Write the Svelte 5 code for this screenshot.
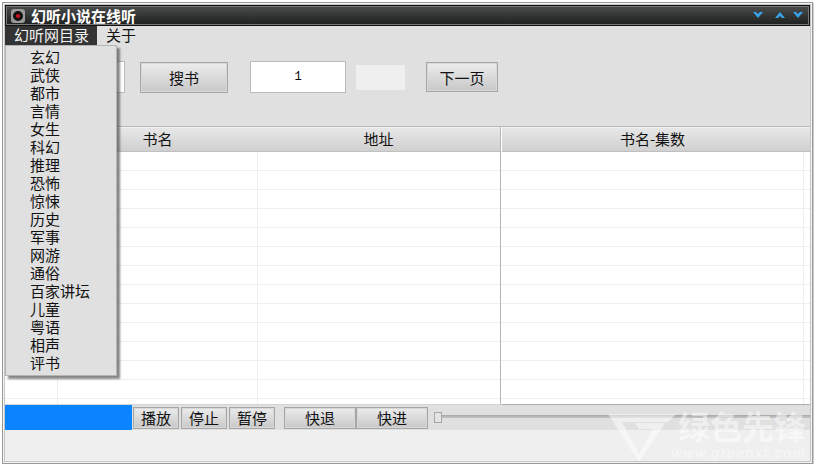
<script>
	const categories = ['玄幻', '武侠', '都市', '言情', '女生', '科幻', '推理', '恐怖', '惊悚', '历史', '军事', '网游', '通俗', '百家讲坛', '儿童', '粤语', '相声', '评书']
	const rows = Array(14).fill(0)
</script>

<div class="window">
	<div class="frame">
		<div class="titlebar">
			<span class="app-icon"><span class="lens"></span></span>
			<span class="title">幻听小说在线听</span>
			<span class="controls">
				<svg width="10" height="7" viewBox="0 0 10 7"><path d="M0 0H3L5 2 7 0H10L5 6Z" /></svg>
				<svg class="up" width="10" height="7" viewBox="0 0 10 7"><path d="M0 6H3L5 4 7 6H10L5 0Z" /></svg>
				<svg width="10" height="7" viewBox="0 0 10 7"><path d="M0 0H3L5 2 7 0H10L5 6Z" /></svg>
			</span>
		</div>

		<div class="menubar">
			<span class="menu-item active">幻听网目录</span>
			<span class="menu-item">关于</span>
			<ul class="popup">
				{#each categories as c}
					<li>{c}</li>
				{/each}
			</ul>
		</div>

		<div class="toolbar">
			<div class="field keyword"></div>
			<button class="btn search">搜书</button>
			<div class="field page">1</div>
			<div class="total"></div>
			<button class="btn next">下一页</button>
		</div>

		<div class="tables">
			<div class="table books">
				<div class="head">
					<span class="c0"></span>
					<span class="c1">书名</span>
					<span class="c2">地址</span>
				</div>
				{#each rows as _}
					<div class="row">
						<span class="c0"></span>
						<span class="c1"></span>
						<span class="c2"></span>
					</div>
				{/each}
			</div>
			<div class="table episodes">
				<div class="head">
					<span class="wide">书名-集数</span>
					<span class="end"></span>
				</div>
				{#each rows as _}
					<div class="row">
						<span class="wide"></span>
						<span class="end"></span>
					</div>
				{/each}
			</div>
		</div>

		<div class="player">
			<div class="progress"></div>
			<button class="btn small">播放</button>
			<button class="btn small">停止</button>
			<button class="btn small">暂停</button>
			<button class="btn seek back">快退</button>
			<button class="btn seek">快进</button>
			<div class="slider"><span class="thumb"></span></div>
		</div>

		<div class="footer"></div>

		<div class="watermark">
			<svg width="70" height="50" viewBox="0 0 70 50">
				<path d="M0 2H68L60 10H14L31 42 45 17H31L27 11H57L31 50Z" />
			</svg>
			<div class="mark-text">
				<span class="mark-cn">绿色先锋</span>
				<span class="mark-url">www.greenxf.com</span>
			</div>
		</div>
	</div>
</div>

<style>
	:global(body) {
		background: #fff;
		font-family: "Noto Sans CJK SC", "Liberation Sans", sans-serif;
	}

	.window {
		box-sizing: border-box;
		width: 811px;
		height: 462px;
		margin: 2px 0 0 2px;
		padding: 1px;
		border: 1px solid #999;
		background: #f4f4f4;
		box-shadow: 1px 1px 0 #ccc;
	}

	.frame {
		position: relative;
		box-sizing: border-box;
		height: 100%;
		border: 1px solid #c6c6c6;
		background: #e0e0e0;
		display: flex;
		flex-direction: column;
		overflow: hidden;
		color: #111;
		font-size: 15px;
	}

	.titlebar {
		box-sizing: border-box;
		height: 21px;
		flex: none;
		display: flex;
		align-items: center;
		padding: 0 6px 0 5px;
		border: 1px solid #111;
		box-shadow: inset 0 0 0 1px #777;
		background: linear-gradient(#4b4d4d, #1d1f1f);
	}

	.app-icon {
		box-sizing: border-box;
		width: 14px;
		height: 14px;
		border-radius: 3px;
		background: #999;
		display: flex;
		align-items: center;
		justify-content: center;
	}

	.lens {
		box-sizing: border-box;
		width: 10px;
		height: 10px;
		border-radius: 50%;
		background: #d01020;
		border: 3px solid #111;
	}

	.title {
		margin-left: 6px;
		color: #fff;
		font-weight: 700;
		font-size: 15px;
		line-height: 19px;
	}

	.controls {
		margin-left: auto;
		display: flex;
		gap: 12px;
	}

	.controls .up {
		margin-right: -4px;
	}

	.controls svg path {
		fill: #35a4ea;
	}

	.menubar {
		position: relative;
		z-index: 2;
		height: 20px;
		flex: none;
		display: flex;
		align-items: stretch;
		line-height: 18px;
	}

	.menu-item {
		padding: 0 9px;
		white-space: nowrap;
	}

	.menu-item.active {
		background: #333;
		color: #f2f2f2;
		height: 19px;
		padding-right: 8px;
	}

	.popup {
		position: absolute;
		left: 0;
		top: 19px;
		box-sizing: border-box;
		width: 112px;
		height: 331px;
		margin: 0;
		padding: 2px 0 0 24px;
		list-style: none;
		background: #e0e0e0;
		border: 1px solid #b4b4b4;
		box-shadow: 3px 3px 2px rgba(70, 70, 70, 0.65);
	}

	.popup li {
		height: 18px;
		line-height: 18px;
		font-size: 15px;
	}

	.toolbar {
		box-sizing: border-box;
		height: 81px;
		flex: none;
		display: flex;
		align-items: center;
		padding: 15px 0 34px;
	}

	.field {
		box-sizing: border-box;
		height: 32px;
		background: #fff;
		border: 1px solid #bbb;
		text-align: center;
		color: #000;
		font-family: "Liberation Mono", monospace;
		font-size: 12px;
		line-height: 30px;
	}

	.keyword {
		width: 85px;
		margin-left: 35px;
	}

	.page {
		width: 96px;
		margin-left: 22px;
	}

	.total {
		width: 49px;
		height: 25px;
		margin-left: 10px;
		background: #efefef;
	}

	.btn {
		box-sizing: border-box;
		margin: 0;
		padding: 0;
		font: inherit;
		color: #111;
		border: 1px solid #a6a6a6;
		background: linear-gradient(#ececec, #c8c8c8);
		box-shadow: inset 0 0 0 1px #d8d8d8;
		line-height: 1;
	}

	.search {
		width: 88px;
		height: 31px;
		margin-left: 15px;
	}

	.next {
		width: 72px;
		height: 30px;
		margin-left: 21px;
	}

	.tables {
		box-sizing: border-box;
		height: 279px;
		flex: none;
		display: flex;
		margin-top: -1px;
		border-top: 1px solid #b8b8b8;
	}

	.table {
		background: #fff;
		display: flex;
		flex-direction: column;
		overflow: hidden;
	}

	.books {
		box-sizing: border-box;
		width: 496px;
		flex: none;
		border-right: 1px solid #b5b5b5;
		border-bottom: 1px solid #d4d4d4;
	}

	.episodes {
		flex: 1;
		border-left: 1px solid #fff;
		border-bottom: 1px solid #adadad;
	}

	.head {
		height: 25px;
		flex: none;
		display: flex;
		box-sizing: border-box;
		border-bottom: 1px solid #c0c0c0;
		background: linear-gradient(#e8e8e8, #d0d0d0);
		box-shadow: inset 0 1px 0 #f2f2f2;
		line-height: 24px;
		text-align: center;
	}

	.row {
		height: 19px;
		flex: none;
		display: flex;
		box-sizing: border-box;
		border-bottom: 1px solid #efefef;
	}

	.c0 {
		width: 53px;
		flex: none;
		box-sizing: border-box;
		border-right: 1px solid #efefef;
	}

	.c1 {
		width: 200px;
		flex: none;
		box-sizing: border-box;
		border-right: 1px solid #efefef;
	}

	.head .c0,
	.head .c1,
	.head .end {
		border-color: transparent;
	}

	.c2 {
		flex: 1;
		padding-right: 1px;
	}

	.wide {
		flex: 1;
	}

	.end {
		width: 7px;
		flex: none;
		box-sizing: border-box;
		border-left: 1px solid #efefef;
	}

	.player {
		height: 25px;
		flex: none;
		display: flex;
		align-items: center;
		background: #e0e0e0;
	}

	.progress {
		width: 128px;
		height: 25px;
		margin: 0 1px 0 -1px;
		background: #0a84ff;
		flex: none;
	}

	.small {
		width: 46px;
		height: 22px;
		margin-right: 2px;
		font-size: 15px;
	}

	.seek {
		width: 72px;
		height: 22px;
	}

	.back {
		margin-left: 7px;
	}

	.slider {
		flex: 1;
		height: 11px;
		margin-left: 6px;
		display: flex;
		align-items: center;
		background: linear-gradient(#a8a8a8, #c6c6c6) 0 3px / 100% 3px no-repeat;
	}

	.thumb {
		box-sizing: border-box;
		width: 8px;
		height: 11px;
		border: 1px solid #a6a6a6;
		background: #e4e4e4;
	}

	.footer {
		flex: 1;
		background: #efefef;
	}

	.watermark {
		position: absolute;
		left: 603px;
		top: 407px;
		display: flex;
		color: #fff;
		opacity: 0.5;
		pointer-events: none;
	}

	.watermark svg {
		flex: none;
	}

	.watermark svg path {
		fill: #fff;
	}

	.mark-text {
		display: flex;
		flex-direction: column;
		align-items: flex-end;
	}

	.mark-cn {
		font-size: 32px;
		font-weight: 700;
		line-height: 34px;
		margin-top: -4px;
	}

	.mark-url {
		margin-top: 3px;
		margin-left: -20px;
		font-family: "Liberation Sans", sans-serif;
		font-style: italic;
		font-size: 14px;
		letter-spacing: 1.6px;
		line-height: 16px;
		white-space: nowrap;
	}
</style>
